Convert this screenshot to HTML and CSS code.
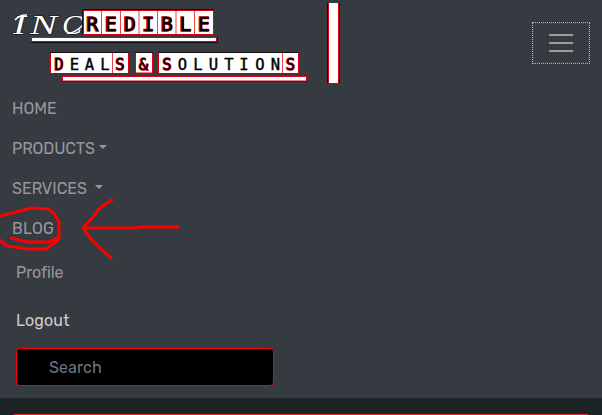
FILE: index.html
```html
<!DOCTYPE html>
<html lang="en">
<head>
<meta charset="utf-8">
<title>Incredible Deals &amp; Solutions</title>
<link rel="stylesheet" href="styles.css">
</head>
<body>
<header class="navbar">
  <div class="top">
    <svg class="logo" width="330" height="84" viewBox="12 0 330 84" role="img" aria-label="Incredible Deals and Solutions">
      <g class="script">
        <text x="13" y="34" textLength="13" lengthAdjust="spacingAndGlyphs">I</text>
        <text x="30" y="34" textLength="27" lengthAdjust="spacingAndGlyphs">N</text>
        <text x="62" y="34" textLength="20" lengthAdjust="spacingAndGlyphs">C</text>
      </g>
      <path class="swash" d="M15 20Q19 15 27 15M67 33Q74 34 83 25"/>
      <g class="tile">
        <rect x="83.5" y="10.5" width="130" height="24"/>
        <rect x="50.5" y="53" width="78" height="20"/>
        <rect x="135.5" y="53" width="17" height="20"/>
        <rect x="158.5" y="53" width="140" height="20"/>
      </g>
      <path class="edge" d="M82.5 35V9.500H214M49.500 52.500H129M135 52.500H153M158 52.500H299"/>
      <path class="divider" d="M101.500 10V35M120.500 10V35M139 10V35M157.500 10V35M176 10V35M194.500 10V35M112.500 53V73M282.500 53V73"/>
      <path class="trim" d="M83.500 35V10.500H213.500V34.500H83M50.500 73V53M128.500 53V73M135.500 53V73H152.500V53M158.500 53V73M298.500 53V73"/>
      <text class="big glow" y="30.500" x="92 110.500 129.500 148 166.500 185 203.500">REDIBLE</text>
      <text class="big" y="30.500" x="92.500 111 130 148.500 167 185.500 204">REDIBLE</text>
      <g class="small">
        <text y="69.500" x="59 74.500 89.500 105 120"><tspan class="accent">D</tspan>EAL<tspan class="accent">S</tspan></text>
        <text class="accent" y="69.500" x="143.500">&amp;</text>
        <text y="69.500" x="167 182.500 198 213.500 229 244 260 275.500 290.500"><tspan class="accent">S</tspan>OLUTION<tspan class="accent">S</tspan></text>
      </g>
      <path class="edge" d="M31 42.500H217.500V37M62 81.500H307.500"/>
      <rect class="bar" x="31.500" y="37.500" width="185" height="4"/>
      <rect class="bar" x="62.500" y="76.500" width="244" height="4.500"/>
      <rect x="329" y="3" width="10" height="80" fill="#fff"/>
      <path class="side" d="M328.500 3V83M338.500 3V83"/>
      <path class="edge" d="M327.500 3V83M339.500 3V83"/>
    </svg>
    <button class="toggler" type="button" aria-label="Toggle navigation">
      <span class="toggler-frame">
        <svg width="24" height="20" viewBox="0 0 24 20"><path d="M0 2H24M0 10H24M0 18H24"/></svg>
      </span>
    </button>
  </div>
  <nav class="menu">
    <a class="home"><span>HOME</span></a>
    <a class="products"><span>PRODUCTS</span><i class="caret"></i></a>
    <a class="services"><span>SERVICES</span><i class="caret"></i></a>
    <a class="blog"><span>BLOG</span></a>
  </nav>
  <div class="account">
    <a class="profile">Profile</a>
    <a class="logout">Logout</a>
    <input class="search" type="text" placeholder="Search" aria-label="Search">
  </div>
</header>
<main class="page"><div class="panel"></div></main>
<svg class="marker" width="190" height="75" viewBox="0 195 190 75" aria-hidden="true">
  <path d="M-2 217L8 214L20 211L31 208L48 209L54 213L59 222L59 238L56 242L46 249L28 249L7 246L2 242L-2 238M11 238L27 242L48 242L58 238"/>
  <path d="M112 200L105 204L99 209L93 217L83 228L90 238L100 248L111 258M83 228H136L140 227H178"/>
</svg>
</body>
</html>
```
FILE: styles.css
```css
* { box-sizing: border-box; }
body {
  margin: 0;
  height: 415px;
  overflow: hidden;
  background: #1c2426;
  font: 16px/24px Rubik, Roboto, sans-serif;
}
.navbar { height: 398px; background: #363a41; color: #96989b; }
.top { display: flex; justify-content: space-between; height: 88px; padding: 0 12px; }
.logo { display: block; }
.toggler {
  width: 58px;
  height: 42px;
  margin-top: 22px;
  padding: 0;
  background: none;
  border: 1px dotted #b5b7b9;
}
.toggler-frame {
  display: flex;
  align-items: center;
  justify-content: center;
  height: 40px;
  border: 1px solid #42464b;
  border-radius: 4px;
}
.toggler path { stroke: #9a9c9f; stroke-width: 2; }
.menu { padding: 0 12px; }
.menu a { display: flex; align-items: center; height: 40px; padding-top: 2px; }
.caret {
  margin: -4px 0 0 4px;
  border: 4px solid transparent;
  border-top-color: currentColor;
  border-bottom: 0;
}
.products { letter-spacing: -0.1px; }
.blog { letter-spacing: 0.2px; }
.services .caret { margin-left: 8px; }
.account { padding: 0 16px; }
.profile, .logout { display: flex; align-items: center; height: 48px; padding-top: 2px; }
.profile { letter-spacing: -0.1px; }
.logout { color: #cbccce; letter-spacing: 0.15px; }
.search {
  display: block;
  width: 258px;
  height: 38px;
  margin-top: 4px;
  padding: 0 32px;
  background: #000;
  border: 1px solid #f00;
  border-radius: 4px;
  font: inherit;
  letter-spacing: 0.1px;
}
.search::placeholder { color: #6c757d; opacity: 1; }
.page { padding: 16px 13px 0; }
.panel { height: 10px; border-top: 2px solid #dc3038; border-radius: 2px; }
.script text { font: italic 28px "Liberation Serif", serif; fill: #fff; stroke: #111; stroke-width: 1px; paint-order: stroke; }
.swash { fill: none; stroke: #fff; stroke-width: 1.5; }
.tile rect { fill: #fff; }
.divider { fill: none; stroke: #f04050; stroke-width: 1; }
.trim { fill: none; stroke: #e00010; stroke-width: 1; }
.edge { fill: none; stroke: #101010; stroke-width: 1; }
.side { stroke: #e00010; }
.bar { fill: #fff; stroke: #e00010; stroke-width: 1; }
.big { font: 20px "DejaVu Sans Mono", monospace; text-anchor: middle; fill: #000; stroke: #000; stroke-width: 0.5px; }
.big.glow { fill: #e00010; stroke: #e00010; stroke-width: 1.4px; }
.small text { font: 15.5px "DejaVu Sans Mono", monospace; text-anchor: middle; fill: #000; stroke: #000; stroke-width: 0.4px; }
.small .accent { stroke: #d00010; stroke-width: 1.3px; paint-order: stroke; }
.small text.accent { stroke: #d00010; stroke-width: 1.3px; }
.marker { position: absolute; left: 0; top: 195px; }
.marker path { fill: none; stroke: #f00; stroke-width: 3; stroke-linecap: round; stroke-linejoin: round; }
```
